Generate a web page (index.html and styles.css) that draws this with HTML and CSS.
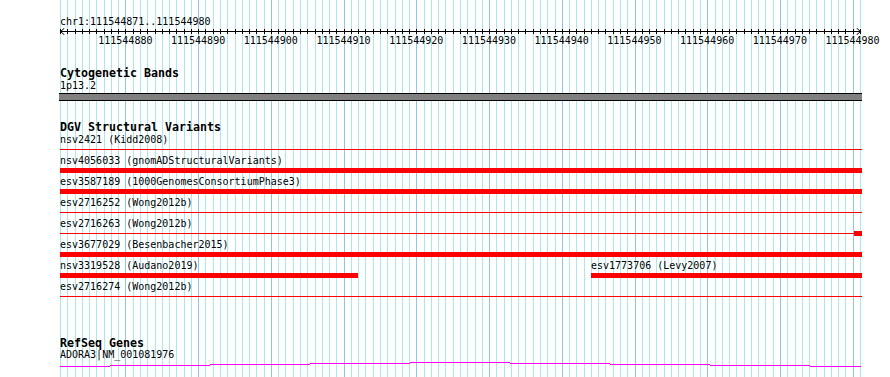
FILE: index.html
```html
<!DOCTYPE html>
<html lang="en">
<head>
<meta charset="utf-8">
<title>Genome browser – chr1:111544871..111544980</title>
<link rel="stylesheet" href="styles.css">
</head>
<body>
<div class="browser">
  <svg class="grid" width="890" height="377" viewBox="0 0 890 377" aria-hidden="true">
    <defs>
      <pattern id="bp-lines" x="60" y="0" width="80" height="377" patternUnits="userSpaceOnUse">
        <rect x="0" width="1" height="377"/>
        <rect x="7" width="1" height="377"/>
        <rect x="15" width="1" height="377"/>
        <rect x="22" width="1" height="377"/>
        <rect x="29" width="1" height="377"/>
        <rect x="36" width="1" height="377"/>
        <rect x="44" width="1" height="377"/>
        <rect x="51" width="1" height="377"/>
        <rect x="58" width="1" height="377"/>
        <rect x="65" width="1" height="377"/>
        <rect x="73" width="1" height="377"/>
      </pattern>
    </defs>
    <rect class="grid-minor" x="60" y="0" width="801" height="377" fill="url(#bp-lines)"/>
    <g class="grid-major">
      <rect x="125" width="1" height="377"/>
      <rect x="198" width="1" height="377"/>
      <rect x="271" width="1" height="377"/>
      <rect x="344" width="1" height="377"/>
      <rect x="416" width="1" height="377"/>
      <rect x="489" width="1" height="377"/>
      <rect x="562" width="1" height="377"/>
      <rect x="635" width="1" height="377"/>
      <rect x="707" width="1" height="377"/>
      <rect x="780" width="1" height="377"/>
      <rect x="853" width="1" height="377"/>
    </g>
  </svg>

  <div class="panel">
    <section class="ruler">
      <div class="ruler-title">chr1:111544871..111544980</div>
      <svg class="axis" width="802" height="7" viewBox="0 0 802 7" aria-hidden="true">
        <defs>
          <pattern id="bp-ticks" x="0" y="0" width="80" height="7" patternUnits="userSpaceOnUse">
            <rect x="0" y="1" width="1" height="5"/>
            <rect x="7" y="1" width="1" height="5"/>
            <rect x="15" y="1" width="1" height="5"/>
            <rect x="22" y="1" width="1" height="5"/>
            <rect x="29" y="1" width="1" height="5"/>
            <rect x="36" y="1" width="1" height="5"/>
            <rect x="44" y="1" width="1" height="5"/>
            <rect x="51" y="1" width="1" height="5"/>
            <rect x="58" y="1" width="1" height="5"/>
            <rect x="65" y="1" width="1" height="5"/>
            <rect x="73" y="1" width="1" height="5"/>
          </pattern>
        </defs>
        <rect x="0" y="0" width="801" height="7" fill="url(#bp-ticks)"/>
        <rect x="0" y="3" width="801" height="1"/>
        <path class="arrow" d="M4.5 0 L0.5 3.5 L4.5 7"/>
        <path class="arrow" d="M796.5 0 L800.5 3.5 L796.5 7"/>
      </svg>
      <div class="ruler-labels">
        <span>111544880</span><span>111544890</span><span>111544900</span><span>111544910</span><span>111544920</span><span>111544930</span><span>111544940</span><span>111544950</span><span>111544960</span><span>111544970</span><span>111544980</span>
      </div>
    </section>

    <section class="track track-cyto">
      <h2 class="track-title">Cytogenetic Bands</h2>
      <div class="feature-label">1p13.2</div>
      <div class="band"></div>
    </section>

    <section class="track track-dgv">
      <h2 class="track-title">DGV Structural Variants</h2>
      <div class="rows">
        <div class="row">
          <div class="feature">
            <div class="feature-label">nsv2421 (Kidd2008)</div>
            <div class="glyph"><div class="line"></div></div>
          </div>
        </div>
        <div class="row">
          <div class="feature">
            <div class="feature-label">nsv4056033 (gnomADStructuralVariants)</div>
            <div class="glyph"><div class="bar"></div></div>
          </div>
        </div>
        <div class="row">
          <div class="feature">
            <div class="feature-label">esv3587189 (1000GenomesConsortiumPhase3)</div>
            <div class="glyph"><div class="bar"></div></div>
          </div>
        </div>
        <div class="row">
          <div class="feature">
            <div class="feature-label">esv2716252 (Wong2012b)</div>
            <div class="glyph"><div class="line"></div></div>
          </div>
        </div>
        <div class="row">
          <div class="feature">
            <div class="feature-label">esv2716263 (Wong2012b)</div>
            <div class="glyph"><div class="line"></div><div class="bar bar-end"></div></div>
          </div>
        </div>
        <div class="row">
          <div class="feature">
            <div class="feature-label">esv3677029 (Besenbacher2015)</div>
            <div class="glyph"><div class="bar"></div></div>
          </div>
        </div>
        <div class="row">
          <div class="feature" style="width:298px">
            <div class="feature-label">nsv3319528 (Audano2019)</div>
            <div class="glyph"><div class="bar"></div></div>
          </div>
          <div class="feature" style="margin-left:233px;width:271px">
            <div class="feature-label">esv1773706 (Levy2007)</div>
            <div class="glyph"><div class="bar"></div></div>
          </div>
        </div>
        <div class="row">
          <div class="feature">
            <div class="feature-label">esv2716274 (Wong2012b)</div>
            <div class="glyph"><div class="line"></div></div>
          </div>
        </div>
      </div>
    </section>

    <section class="track track-refseq">
      <h2 class="track-title">RefSeq Genes</h2>
      <div class="feature-label">ADORA3|NM_001081976</div>
      <svg class="gene" width="802" height="6" viewBox="0 0 802 6" aria-hidden="true">
        <rect x="0" y="5" width="50" height="1"/>
        <rect x="50" y="4" width="100" height="1"/>
        <rect x="150" y="3" width="100" height="1"/>
        <rect x="250" y="2" width="100" height="1"/>
        <rect x="350" y="1" width="100" height="1"/>
        <rect x="450" y="2" width="100" height="1"/>
        <rect x="550" y="3" width="100" height="1"/>
        <rect x="650" y="4" width="100" height="1"/>
        <rect x="750" y="5" width="51" height="1"/>
      </svg>
    </section>
  </div>
</div>
</body>
</html>
```

FILE: styles.css
```css
html,
body {
  margin: 0;
  padding: 0;
  background: #ffffff;
}

body {
  width: 890px;
  height: 377px;
  overflow: hidden;
}

.browser {
  position: relative;
  width: 890px;
  height: 377px;
}

/* background base-pair grid */
.grid {
  position: absolute;
  left: 0;
  top: 0;
  z-index: 0;
  shape-rendering: crispEdges;
}

.grid #bp-lines rect {
  fill: #a8e8ee;
}

.grid-major rect {
  fill: #8cc6ec;
}

/* drawing panel */
.panel {
  position: relative;
  z-index: 1;
  margin-left: 60px;
  width: 802px;
  font-family: "DejaVu Sans Mono", "Liberation Mono", monospace;
  font-size: 10px;
  line-height: 12px;
  color: #000;
}

/* ruler */
.ruler {
  padding-top: 16px;
}

.ruler-title {
  height: 12px;
  white-space: nowrap;
}

.axis {
  display: block;
  shape-rendering: crispEdges;
  fill: #000;
}

.axis .arrow {
  fill: none;
  stroke: #000;
  stroke-width: 1;
  shape-rendering: auto;
}

.ruler-labels {
  display: flex;
  padding-left: 29px;
  height: 12px;
  white-space: nowrap;
}

.ruler-labels span {
  flex: 0 0 72.7273px;
  text-align: center;
}

/* tracks */
.track-title {
  margin: 0;
  padding-top: 1px;
  height: 13px;
  font-size: 11.63px;
  line-height: 14px;
  font-weight: bold;
  white-space: nowrap;
}

.feature-label {
  height: 12px;
  white-space: nowrap;
}

.track-cyto {
  margin-top: 18px;
}

.track-cyto .feature-label {
  margin-top: 1px;
}

.band {
  margin-top: 1px;
  margin-left: -1px;
  width: 803px;
  height: 6px;
  border-top: 1px solid #000;
  border-bottom: 1px solid #000;
  background: #808080;
}

.track-dgv {
  margin-top: 18px;
}

.rows {
  margin-top: 1px;
}

.row {
  display: flex;
  height: 21px;
}

.feature {
  flex: 0 0 auto;
  width: 100%;
}

.glyph {
  display: flex;
  height: 9px;
}

.line {
  flex: 1 1 auto;
  height: 1px;
  margin-top: 3px;
  background: #ff0000;
}

.bar {
  flex: 1 1 auto;
  height: 5px;
  margin-top: 1px;
  background: #ff0000;
}

.bar-end {
  flex: 0 0 8px;
}

.track-refseq {
  margin-top: 33px;
}

.gene {
  display: block;
  fill: #ff00ff;
  shape-rendering: crispEdges;
}
```
